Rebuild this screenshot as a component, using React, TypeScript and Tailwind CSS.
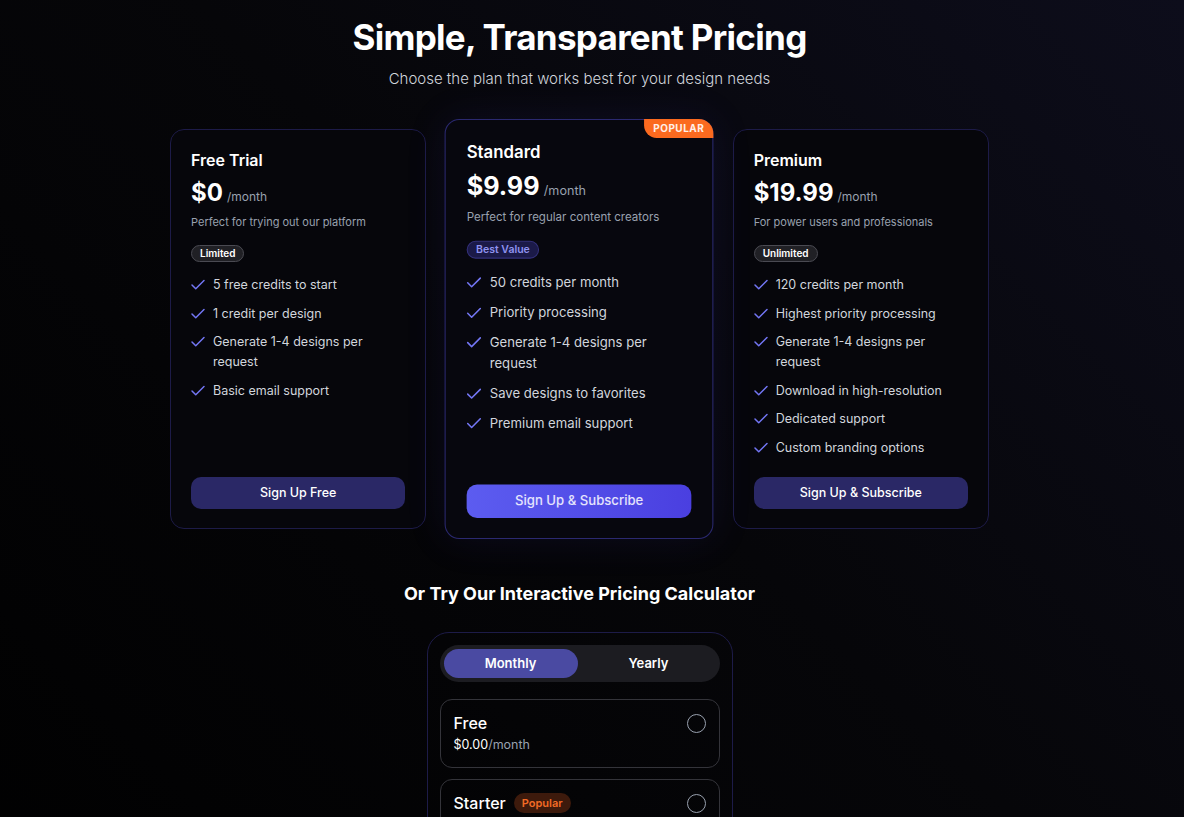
import { Check } from "lucide-react";

type Plan = {
  name: string;
  price: string;
  desc: string;
  badge: string;
  features: string[];
  cta: string;
  featured?: boolean;
};

const plans: Plan[] = [
  {
    name: "Free Trial",
    price: "$0",
    desc: "Perfect for trying out our platform",
    badge: "Limited",
    features: [
      "5 free credits to start",
      "1 credit per design",
      "Generate 1-4 designs per request",
      "Basic email support",
    ],
    cta: "Sign Up Free",
  },
  {
    name: "Standard",
    price: "$9.99",
    desc: "Perfect for regular content creators",
    badge: "Best Value",
    features: [
      "50 credits per month",
      "Priority processing",
      "Generate 1-4 designs per request",
      "Save designs to favorites",
      "Premium email support",
    ],
    cta: "Sign Up & Subscribe",
    featured: true,
  },
  {
    name: "Premium",
    price: "$19.99",
    desc: "For power users and professionals",
    badge: "Unlimited",
    features: [
      "120 credits per month",
      "Highest priority processing",
      "Generate 1-4 designs per request",
      "Download in high-resolution",
      "Dedicated support",
      "Custom branding options",
    ],
    cta: "Sign Up & Subscribe",
  },
];

function PlanCard({ plan }: { plan: Plan }) {
  const featured = plan.featured;
  return (
    <div
      className={`relative flex flex-col rounded-[14px] border px-5 pt-4 pb-[19px] ${
        featured
          ? "z-10 scale-105 border-[#2b2970] bg-[#07070e] shadow-[0_0_40px_rgba(79,70,229,0.10)]"
          : "border-[#1d1b48] bg-[#06060b]"
      }`}
    >
      {/* Popular tag */}
      {featured && (
        <div className="absolute -top-px -right-px rounded-tr-[14px] rounded-bl-[12px] bg-[#fb6a1f] px-[9px] text-[9.5px] leading-[18px] font-bold tracking-[0.05em] text-white/90">
          POPULAR
        </div>
      )}

      <h3 className="text-base leading-7 font-semibold text-white">{plan.name}</h3>
      <div className="mt-[3px] flex items-baseline gap-1">
        <span className="text-2xl leading-8 font-bold text-white">{plan.price}</span>
        <span className="text-[12px] text-gray-400">/month</span>
      </div>
      <p className="mt-[5px] text-[11px] leading-4 text-gray-400">{plan.desc}</p>

      <div className="mt-[15px] flex">
        <span
          className={`rounded-full border px-2 text-[10px] leading-[15px] font-semibold ${
            featured
              ? "border-[#33307a] bg-[#1b1a48] text-[#8f93f0]"
              : "border-[#4a4a52] bg-[#202025] text-white"
          }`}
        >
          {plan.badge}
        </span>
      </div>

      <ul className="mt-[13px] flex flex-1 flex-col gap-[8.6px]">
        {plan.features.map((f) => (
          <li key={f} className="flex gap-1.5 text-[12.5px] leading-5 text-gray-300">
            <Check className="mt-px -ml-0.5 h-[18px] w-[18px] shrink-0 text-[#7376f4]" strokeWidth={2} />
            <span>{f}</span>
          </li>
        ))}
      </ul>

      <button
        className={`mt-[19px] h-8 w-full rounded-[10px] text-[12.5px] font-medium ${
          featured
            ? "bg-gradient-to-r from-[#5c5cf0] to-[#4a3fe0] text-white/85"
            : "bg-[#2a2866] text-white"
        }`}
      >
        {plan.cta}
      </button>
    </div>
  );
}

function PlanOption({ name, price, popular }: { name: string; price: string; popular?: boolean }) {
  return (
    <div className="flex items-start justify-between rounded-xl border border-[#34343a] px-[13px] py-[11.5px]">
      <div>
        <div className="flex items-center gap-2">
          <span className="text-base leading-6 font-medium text-white">{name}</span>
          {popular && (
            <span className="rounded-full bg-[#3d1a0c] px-2 text-[11px] leading-5 font-semibold text-[#f26a25]">
              Popular
            </span>
          )}
        </div>
        <div className="text-[12.5px] leading-5 text-white">
          {price}
          <span className="text-gray-400">/month</span>
        </div>
      </div>
      <span className="mt-[3px] h-[19px] w-[19px] rounded-full border-[1.5px] border-gray-400" />
    </div>
  );
}

export default function App() {
  return (
    <div className="min-h-screen bg-[linear-gradient(225deg,#0d0d1b_0%,#060609_45%,#000_100%)] font-['Inter',sans-serif] text-white">
      <div className="flex justify-center pr-[25px]">
        <div className="w-[819px] pt-[17px] pb-16">
          {/* Header */}
          <div className="text-center">
            <h1 className="text-[35px] leading-10 font-bold tracking-[-0.02em] text-white">
              Simple, Transparent Pricing
            </h1>
            <p className="mt-2.5 text-[15px] leading-6 font-light text-gray-300">
              Choose the plan that works best for your design needs
            </p>
          </div>

          {/* Plan cards */}
          <div className="mt-[38px] grid grid-cols-3 gap-[25px]">
            {plans.map((p) => (
              <PlanCard key={p.name} plan={p} />
            ))}
          </div>

          {/* Calculator */}
          <h2 className="mt-[51px] text-center text-lg leading-7 font-bold text-white">
            Or Try Our Interactive Pricing Calculator
          </h2>
          <div className="mx-auto mt-6 w-[306px] rounded-[22px] border border-[#1d1b48] p-3">
            <div className="grid h-[37px] grid-cols-2 gap-1 rounded-full bg-[#1c1c21] p-1">
              <button className="rounded-full bg-[#4a4aa2] text-[13px] font-semibold text-white">
                Monthly
              </button>
              <button className="rounded-full text-[13px] font-semibold text-white">Yearly</button>
            </div>
            <div className="mt-[17px] flex flex-col gap-[11px]">
              <PlanOption name="Free" price="$0.00" />
              <PlanOption name="Starter" price="$4.99" popular />
              <PlanOption name="Pro" price="$9.99" />
            </div>
          </div>
        </div>
      </div>
    </div>
  );
}
